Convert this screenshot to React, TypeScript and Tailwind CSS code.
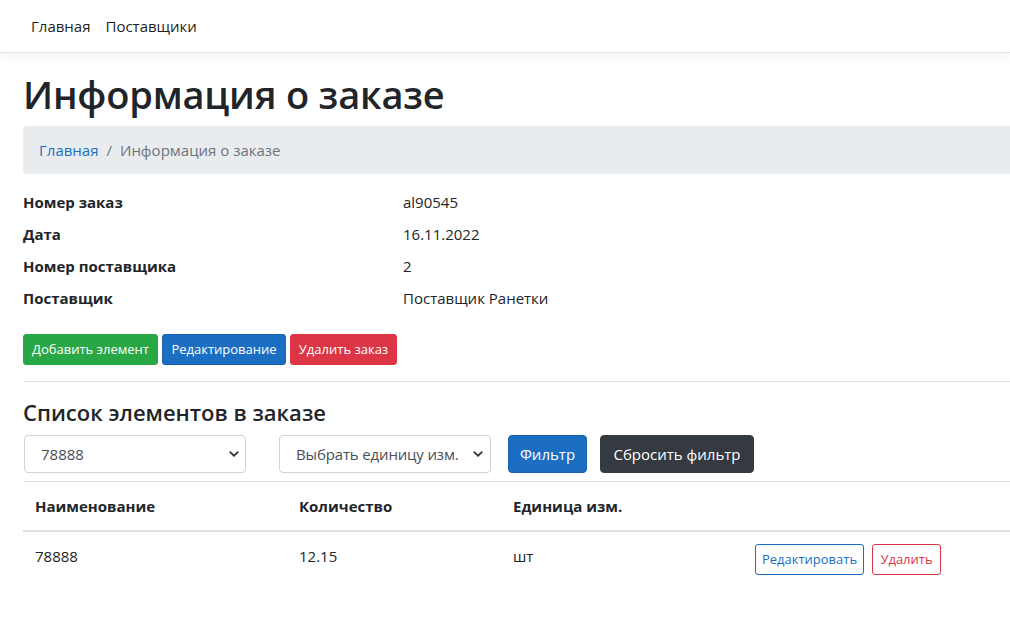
import React from "react";

function Chevron() {
  return (
    <svg width="10" height="10" viewBox="0 0 16 16" className="shrink-0">
      <path d="M2 5l6 6 6-6" fill="none" stroke="#343a40" strokeWidth="3" strokeLinecap="round" strokeLinejoin="round" />
    </svg>
  );
}

export default function App() {
  const rows = [
    ["Номер заказ", "al90545"],
    ["Дата", "16.11.2022"],
    ["Номер поставщика", "2"],
    ["Поставщик", "Поставщик Ранетки"],
  ];
  return (
    <div
      className="min-h-screen w-full overflow-hidden bg-white text-[#212529]"
      style={{ fontFamily: '"Open Sans", "Noto Sans", sans-serif' }}
    >
      <nav className="flex h-[53px] items-center gap-[15px] border-b border-[#dee2e6] bg-white pl-[31px] text-[15px] text-[rgba(0,0,0,0.9)] shadow-[0_4px_12px_rgba(0,0,0,0.05)]">
        <span>Главная</span>
        <span>Поставщики</span>
      </nav>
      <main className="w-[1060px] pl-[23px] pt-[17px]">
        <h1 className="mb-2 flex h-[48px] items-center text-[38px] font-semibold tracking-[-0.005em]">Информация о заказе</h1>
        <div className="mb-4 flex h-[48px] items-center rounded-l-[4px] bg-[#e9ecef] pl-4 text-[15px]">
          <span className="text-[#1b6ec2]">Главная</span>
          <span className="px-2 text-[#6c757d]">/</span>
          <span className="text-[#6c757d]">Информация о заказе</span>
        </div>
        <div className="flex flex-col gap-2 pb-6 text-[15px] leading-6">
          {rows.map(([k, v]) => (
            <div key={k} className="flex">
              <div className="w-[380px] font-bold">{k}</div>
              <div>{v}</div>
            </div>
          ))}
        </div>
        <div className="flex gap-1 text-[13px] text-white">
          <button className="h-[31px] w-[135px] rounded-[3px] border border-[#28a745] bg-[#28a745]">Добавить элемент</button>
          <button className="h-[31px] w-[124px] rounded-[3px] border border-[#1861ac] bg-[#1b6ec2]">Редактирование</button>
          <button className="h-[31px] w-[107px] rounded-[3px] border border-[#dc3545] bg-[#dc3545]">Удалить заказ</button>
        </div>
        <hr className="my-4 border-t border-[#e0e0e0]" />
        <h4 className="mb-2 flex h-[29px] items-center text-[22px] font-semibold">Список элементов в заказе</h4>
        <div className="flex items-center text-[15px]">
          <div className="ml-[1px] flex h-[38px] w-[222px] items-center justify-between rounded-[4px] border border-[#ced4da] pl-[16px] pr-[6px] text-[#495057]">
            <span>78888</span>
            <Chevron />
          </div>
          <div className="ml-[33px] flex h-[38px] w-[212px] items-center justify-between whitespace-nowrap rounded-[4px] border border-[#ced4da] pl-[16px] pr-[7px] text-[#495057]">
            <span className="tracking-[-0.01em]">Выбрать единицу изм.</span>
            <Chevron />
          </div>
          <button className="ml-[17px] h-[38px] w-[79px] rounded-[4px] border border-[#1861ac] bg-[#1b6ec2] text-white">Фильтр</button>
          <button className="ml-[13px] h-[38px] w-[154px] rounded-[4px] border border-[#343a40] bg-[#343a40] text-white">Сбросить фильтр</button>
        </div>
        <table className="mt-[8px] w-full border-collapse text-left text-[15px]">
          <thead>
            <tr className="border-t border-[#dee2e6]">
              <th className="w-[264px] border-b-2 border-[#dee2e6] px-3 py-3 font-bold leading-6">Наименование</th>
              <th className="w-[214px] border-b-2 border-[#dee2e6] px-3 py-3 font-bold leading-6">Количество</th>
              <th className="w-[242px] border-b-2 border-[#dee2e6] px-3 py-3 font-bold leading-6">Единица изм.</th>
              <th className="border-b-2 border-[#dee2e6] px-3 py-3"></th>
            </tr>
          </thead>
          <tbody>
            <tr>
              <td className="px-3 py-3 align-top leading-6">78888</td>
              <td className="px-3 py-3 align-top leading-6">12.15</td>
              <td className="px-3 py-3 align-top leading-6">шт</td>
              <td className="px-3 py-3 align-top">
                <div className="flex gap-2 text-[13px]">
                  <button className="h-[31px] w-[109px] rounded-[3px] border border-[#1b6ec2] text-[#1b6ec2]">Редактировать</button>
                  <button className="h-[31px] w-[69px] rounded-[3px] border border-[#dc3545] text-[#dc3545]">Удалить</button>
                </div>
              </td>
            </tr>
          </tbody>
        </table>
      </main>
    </div>
  );
}
